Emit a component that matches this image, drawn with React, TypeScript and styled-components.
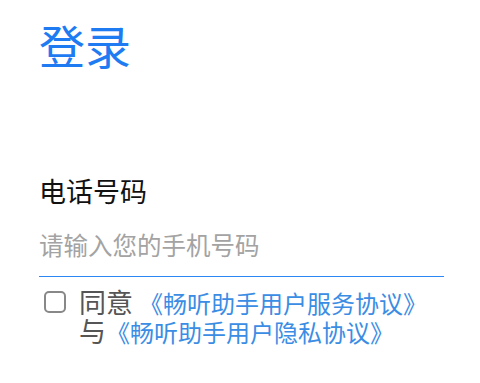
import React from 'react';
import styled, { createGlobalStyle } from 'styled-components';

const GlobalStyle = createGlobalStyle`
  body {
    margin: 0;
    background: #ffffff;
    font-family: 'Noto Sans CJK SC', 'Noto Sans', sans-serif;
  }
`;

const Page = styled.main`
  display: flex;
  flex-direction: column;
  padding: 21px 36px 0 39px;
`;

const Title = styled.h1`
  margin: 0;
  font-size: 46px;
  line-height: 1;
  font-weight: 400;
  color: #1f7bf2;
`;

const Field = styled.div`
  display: flex;
  flex-direction: column;
  margin-top: 110px;
`;

const Label = styled.label`
  font-size: 27px;
  line-height: 1;
  color: #111111;
`;

const PhoneInput = styled.input`
  display: block;
  width: 100%;
  box-sizing: border-box;
  height: 45px;
  margin: 28px 0 0;
  padding: 0 0 20px;
  border: none;
  border-bottom: 1px solid #2b87f3;
  outline: none;
  background: transparent;
  font-family: inherit;
  font-size: 24.5px;
  line-height: 24px;
  color: #111111;

  &::placeholder {
    color: #a3a3a3;
  }
`;

const Agreement = styled.div`
  display: flex;
  align-items: flex-start;
  margin-top: 11px;
  padding-right: 6px;
`;

const Box = styled.span`
  flex: none;
  width: 22px;
  height: 22px;
  box-sizing: border-box;
  margin: 3px 0 0 5px;
  border: 2px solid #888888;
  border-radius: 5px;
`;

const Terms = styled.p`
  flex: 1;
  margin: 0 0 0 13px;
  font-size: 27px;
  line-height: 28px;
  color: #555555;
`;

const Link = styled.a`
  font-size: 24px;
  color: #3b8de4;
  text-decoration: none;
`;

export default function App() {
  return (
    <>
      <GlobalStyle />
      <Page>
        <Title>登录</Title>
        <Field>
          <Label htmlFor="phone">电话号码</Label>
          <PhoneInput id="phone" type="tel" placeholder="请输入您的手机号码" />
        </Field>
        <Agreement>
          <Box role="checkbox" aria-checked="false" />
          <Terms>
            同意 <Link href="#">《畅听助手用户服务协议》</Link>与
            <Link href="#">《畅听助手用户隐私协议》</Link>
          </Terms>
        </Agreement>
      </Page>
    </>
  );
}
